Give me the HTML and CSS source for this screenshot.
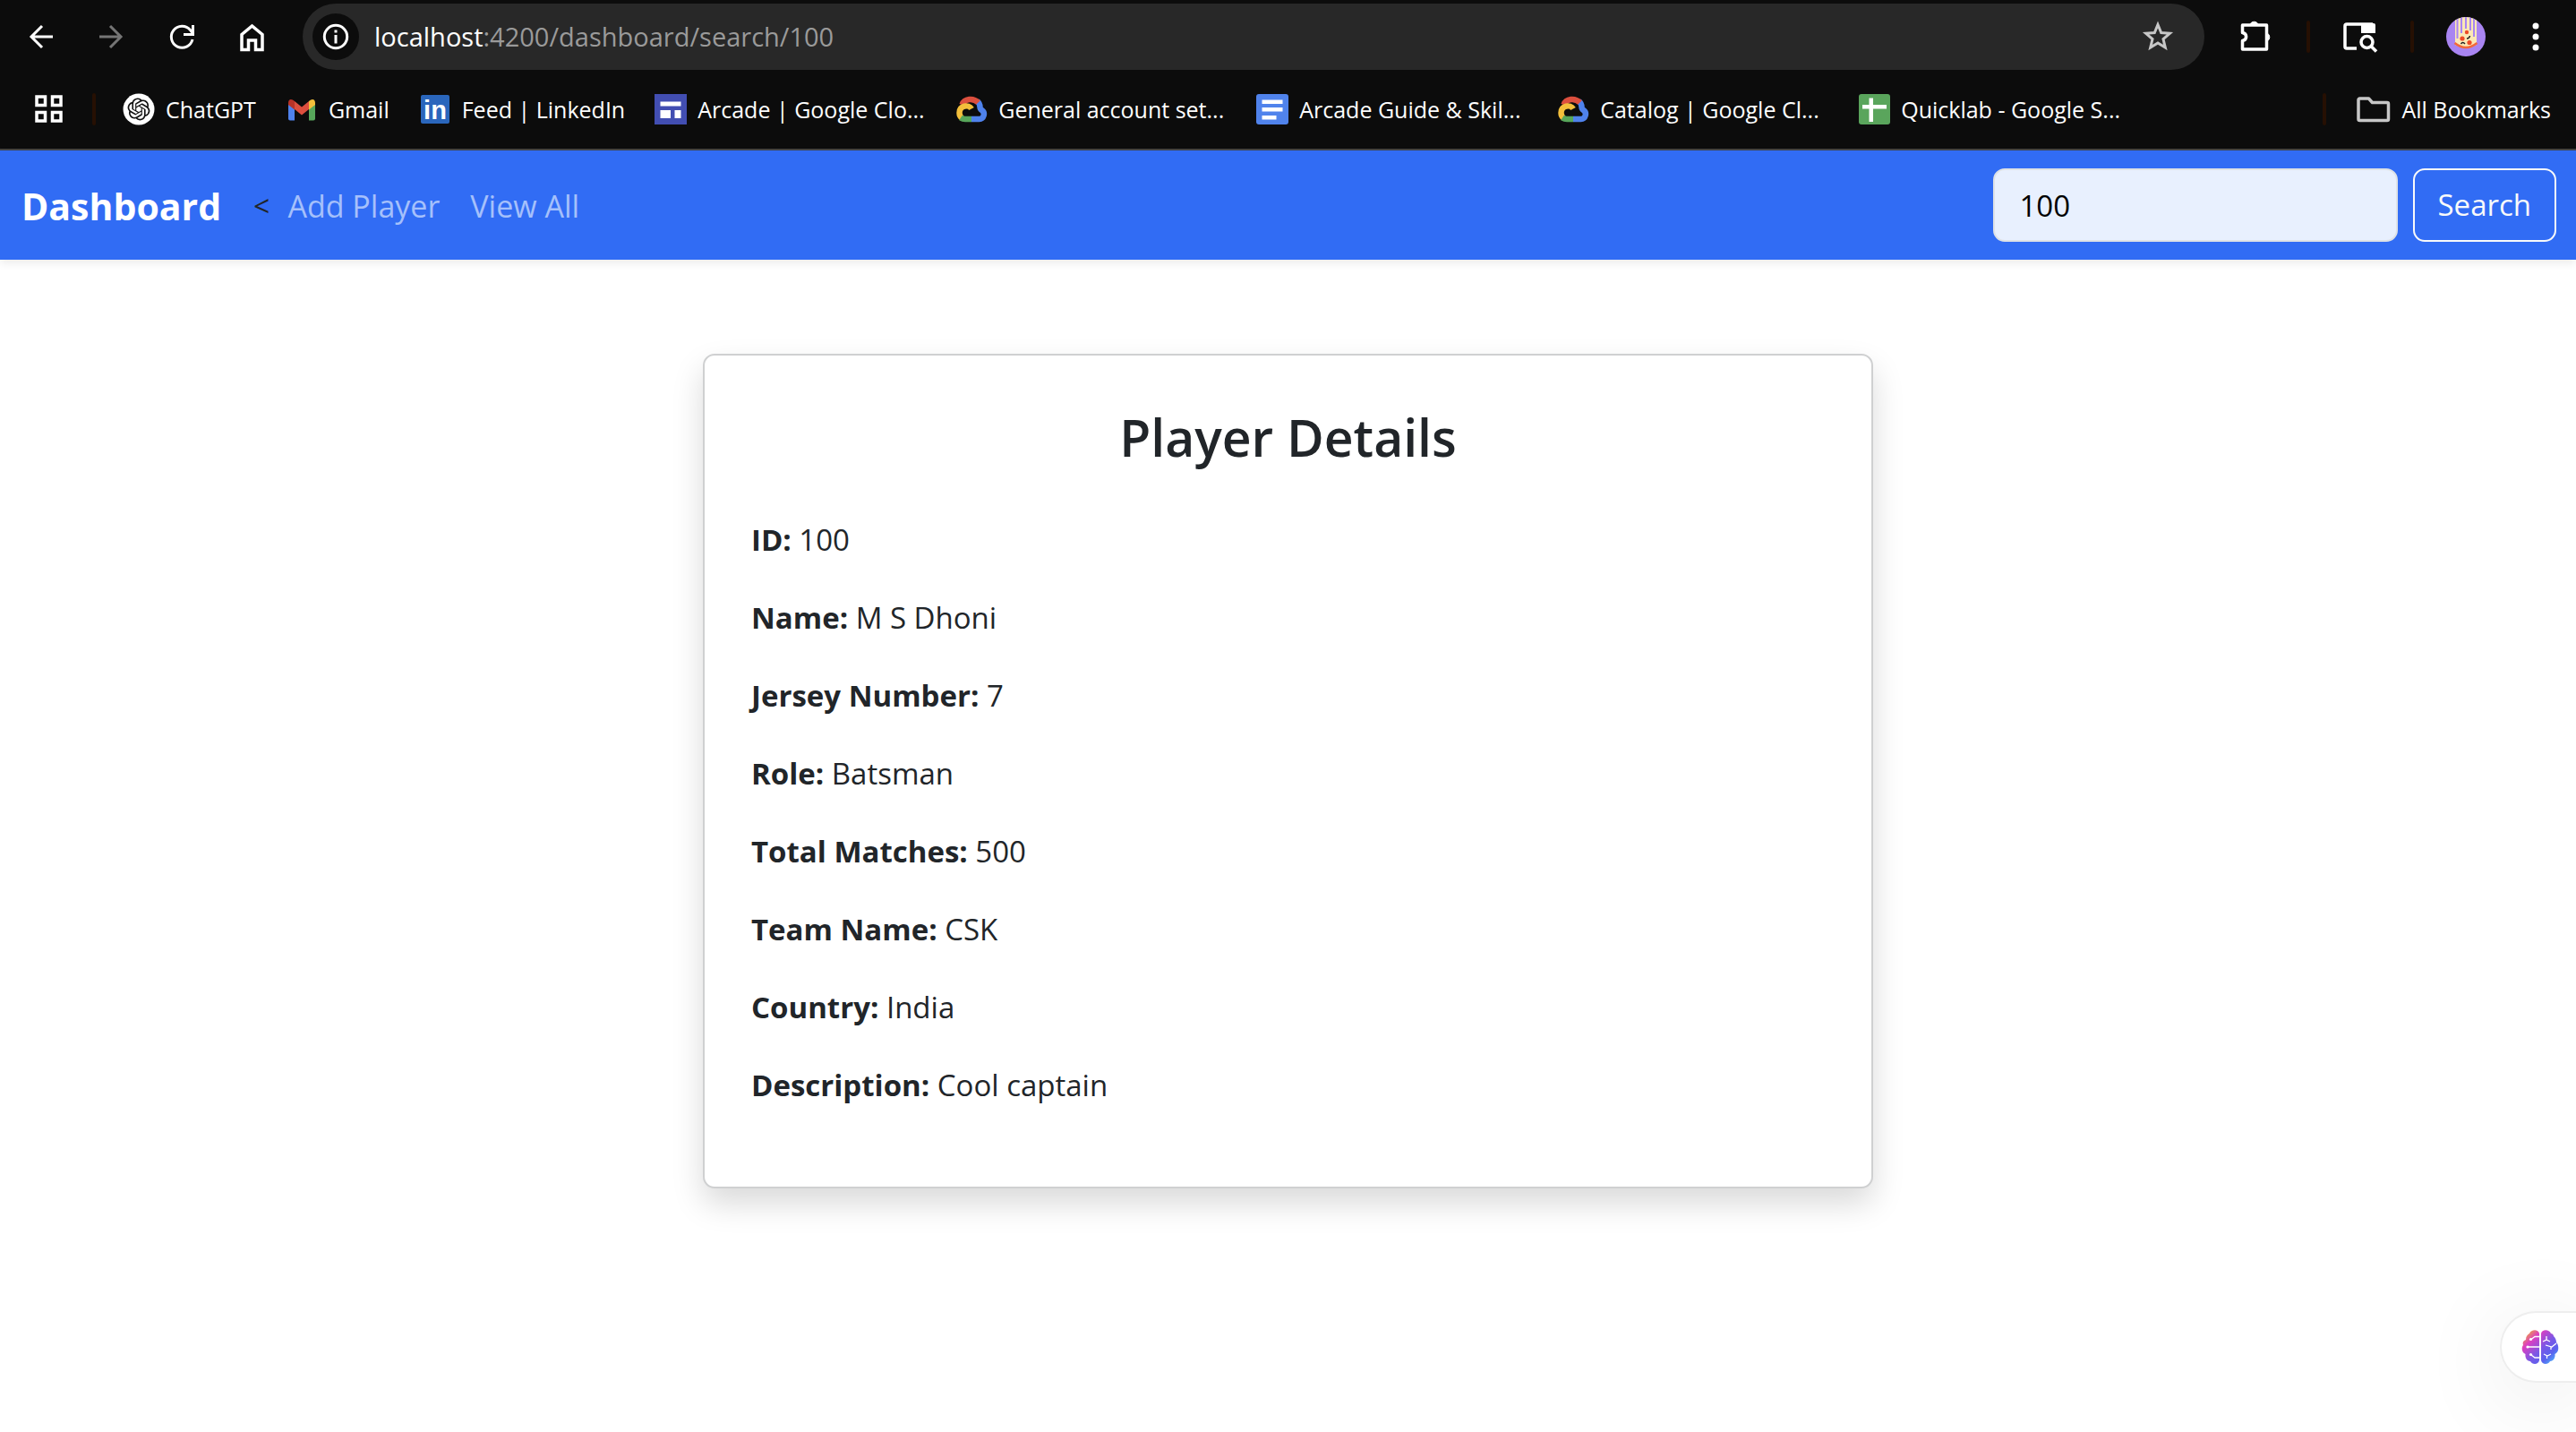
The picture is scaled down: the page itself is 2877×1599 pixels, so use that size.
FILE: index.html
```html
<!DOCTYPE html>
<html lang="en">
<head>
<meta charset="utf-8">
<meta name="viewport" content="width=device-width, initial-scale=1">
<title>Dashboard</title>
<link rel="stylesheet" href="styles.css">
</head>
<body>
<header class="browser">
  <div class="toolbar">
    <button class="icon-btn" type="button" aria-label="Back">
      <svg width="40" height="40" viewBox="0 0 40 40" fill="none" stroke="#fff" stroke-width="3"><path d="M33 20H9M21 8L9 20l12 12"/></svg>
    </button>
    <button class="icon-btn" type="button" aria-label="Forward">
      <svg width="40" height="40" viewBox="0 0 40 40" fill="none" stroke="#757575" stroke-width="3"><path d="M7 20h24M19 8l12 12-12 12"/></svg>
    </button>
    <button class="icon-btn" type="button" aria-label="Reload">
      <svg width="40" height="40" viewBox="0 0 40 40" fill="none" stroke="#fff" stroke-width="3"><path d="M33 23A12 12 0 1 1 30.500 12.500L33 16"/><path d="M33.500 7v10.500H23"/></svg>
    </button>
    <button class="icon-btn" type="button" aria-label="Home">
      <svg width="40" height="40" viewBox="0 0 40 40" fill="none" stroke="#fff" stroke-width="3.500"><path d="M10 34.500V17.500L21.500 8 33 17.500v17h-7.500V24h-8v10.500z"/></svg>
    </button>
    <div class="omnibox">
      <button class="site-info" type="button" aria-label="View site information">
        <svg width="32" height="32" viewBox="0 0 32 32" fill="none" stroke="#fff" stroke-width="3"><circle cx="16" cy="16" r="12.700"/><path d="M16 14v9.500M16 8.500v3"/></svg>
      </button>
      <div class="url"><span class="url-host">localhost</span>:4200/dashboard/search/100</div>
      <button class="icon-btn" type="button" aria-label="Bookmark this tab">
        <svg width="40" height="40" viewBox="0 0 40 40" fill="none" stroke="#c7c7c7" stroke-width="3"><path d="M20 6.500l3.700 9 9.700.8-7.400 6.300 2.300 9.500-8.300-5.100-8.300 5.100 2.300-9.500-7.400-6.300 9.700-.8z"/></svg>
      </button>
    </div>
    <div class="toolbar-actions">
      <button class="icon-btn" type="button" aria-label="Extensions">
        <svg width="40" height="40" viewBox="0 0 40 40"><path d="M4.500 7h27v27h-27v-9.500c5.500-1 5.500-8 0-9z" fill="none" stroke="#fff" stroke-width="3.500" stroke-linejoin="round"/><path d="M13 6a5 5 0 0 1 9 0zM32 16a5 5 0 0 1 0 9z" fill="#fff" stroke="#fff"/></svg>
      </button>
      <span class="divider"></span>
      <button class="icon-btn" type="button" aria-label="Search tabs">
        <svg width="40" height="40" viewBox="0 0 40 40" fill="none" stroke="#fff" stroke-width="3.500"><path d="M16 33H5a2 2 0 0 1-2-2V8a2 2 0 0 1 2-2h29"/><path d="M21 5h14a2 2 0 0 1 2 2v9H21z" fill="#fff" stroke="none"/><circle cx="27.500" cy="26" r="6.500"/><path d="M32 30.500l6 6"/></svg>
      </button>
      <span class="divider"></span>
      <button class="icon-btn" type="button" aria-label="Profile">
        <svg width="44" height="44" viewBox="0 0 44 44">
          <defs><clipPath id="avatar"><circle cx="22" cy="22" r="22"/></clipPath></defs>
          <g clip-path="url(#avatar)">
            <path d="M0 0h44v44H0z" fill="#a985f2"/>
            <path d="M10 0h24v31q-12 7-24 0z" fill="#fbe8b5"/>
            <path d="M12.500 0v24M17 0v18M22 0v13M27 0v15M31 0v22" stroke="#a985f2" stroke-width="2"/>
            <path d="M9.500 29q12.500 10 25 0" stroke="#f2693b" stroke-width="2.500" fill="none"/>
            <g fill="#ee4a25"><circle cx="23" cy="17" r="2.200"/><circle cx="18" cy="24" r="2.600"/><circle cx="26" cy="28.500" r="2.600"/></g>
            <path d="M23 24q3 0 3.500-3M16.500 30q2-3 4.500 0" stroke="#222" stroke-width="1.500" fill="none"/>
          </g>
        </svg>
      </button>
      <button class="icon-btn" type="button" aria-label="Menu">
        <svg width="40" height="40" viewBox="0 0 40 40" fill="#fff"><circle cx="20" cy="8" r="3.500"/><circle cx="20" cy="20" r="3.500"/><circle cx="20" cy="32" r="3.500"/></svg>
      </button>
    </div>
  </div>
  <nav class="bookmarks" aria-label="Bookmarks">
    <button class="icon-btn" type="button" aria-label="Apps">
      <svg width="36" height="36" viewBox="0 0 36 36" fill="none" stroke="#fff" stroke-width="3.500"><path d="M4 4h9.500v9.500H4zM21.500 4H31v9.500h-9.500zM4 21.500h9.500V31H4zM21.500 21.500H31V31h-9.500z"/></svg>
    </button>
    <span class="divider"></span>
    <div class="bookmark-list">
      <a class="bookmark" href="#">
        <svg width="36" height="36" viewBox="0 0 36 36"><circle cx="18" cy="18" r="17.500" fill="#fff"/><path transform="translate(5.500 5.500) scale(1.040)" fill="#111" d="M22.2819 9.8211a5.9847 5.9847 0 0 0-.5157-4.9108 6.0462 6.0462 0 0 0-6.5098-2.9A6.0651 6.0651 0 0 0 4.9807 4.1818a5.9847 5.9847 0 0 0-3.9977 2.9 6.0462 6.0462 0 0 0 .7427 7.0966 5.98 5.98 0 0 0 .511 4.9107 6.051 6.051 0 0 0 6.5146 2.9001A5.9847 5.9847 0 0 0 13.2599 24a6.0557 6.0557 0 0 0 5.7718-4.2058 5.9894 5.9894 0 0 0 3.9977-2.9001 6.0557 6.0557 0 0 0-.7475-7.0729zm-9.022 12.6081a4.4755 4.4755 0 0 1-2.8764-1.0408l.1419-.0804 4.7783-2.7582a.7948.7948 0 0 0 .3927-.6813v-6.7369l2.02 1.1686a.071.071 0 0 1 .038.052v5.5826a4.504 4.504 0 0 1-4.4945 4.4944zm-9.6607-4.1254a4.4708 4.4708 0 0 1-.5346-3.0137l.142.0852 4.783 2.7582a.7712.7712 0 0 0 .7806 0l5.8428-3.3685v2.3324a.0804.0804 0 0 1-.0332.0615L9.74 19.9502a4.4992 4.4992 0 0 1-6.1408-1.6464zM2.3408 7.8956a4.485 4.485 0 0 1 2.3655-1.9728V11.6a.7664.7664 0 0 0 .3879.6765l5.8144 3.3543-2.0201 1.1685a.0757.0757 0 0 1-.071 0l-4.8303-2.7865A4.504 4.504 0 0 1 2.3408 7.872zm16.5963 3.8558L13.1038 8.364 15.1192 7.2a.0757.0757 0 0 1 .071 0l4.8303 2.7913a4.4944 4.4944 0 0 1-.6765 8.1042v-5.6772a.79.79 0 0 0-.407-.667zm2.0107-3.0231l-.142-.0852-4.7735-2.7818a.7759.7759 0 0 0-.7854 0L9.409 9.2297V6.8974a.0662.0662 0 0 1 .0284-.0615l4.8303-2.7866a4.4992 4.4992 0 0 1 6.6802 4.66zM8.3065 12.863l-2.02-1.1638a.0804.0804 0 0 1-.038-.0567V6.0742a4.4992 4.4992 0 0 1 7.3757-3.4537l-.142.0805L8.704 5.459a.7948.7948 0 0 0-.3927.6813zm1.0976-2.3654l2.602-1.4998 2.6069 1.4998v2.9994l-2.5974 1.4997-2.6067-1.4997Z"/></svg>
        <span>ChatGPT</span>
      </a>
      <a class="bookmark" href="#">
        <svg width="36" height="36" viewBox="0 0 36 36"><path d="M3 12v16.500A2 2 0 0 0 5 30.500h5V16z" fill="#4f82ec"/><path d="M33 12v16.500a2 2 0 0 1-2 2h-5V16z" fill="#57a65a"/><path d="M10 9l8 6.500L26 9v9l-8 6.500L10 18z" fill="#dc4f3e"/><path d="M3 11c0-5 4-5 7-2v9.500L3 13z" fill="#b93328"/><path d="M33 11c0-5-4-5-7-2v9.500l7-5.500z" fill="#f3bf3b"/></svg>
        <span>Gmail</span>
      </a>
      <a class="bookmark" href="#">
        <svg width="36" height="36" viewBox="0 0 36 36"><rect x="2" y="2" width="32" height="32" rx="2" fill="#2a66bc"/><text x="18" y="29" text-anchor="middle" class="linkedin-mark">in</text></svg>
        <span>Feed | LinkedIn</span>
      </a>
      <a class="bookmark bookmark-long" href="#">
        <svg width="36" height="36" viewBox="0 0 36 36"><path d="M0 1h36v34H0z" fill="#424eb2"/><path d="M6.500 9.500h23v5h-23zM6.500 19h11.500v9H6.500zM22.500 19h7v9h-7z" fill="#fff"/></svg>
        <span>Arcade | Google Clo...</span>
      </a>
      <a class="bookmark bookmark-long" href="#">
        <svg width="36" height="36" viewBox="0 0 36 36"><use href="#cloud"/></svg>
        <span>General account set...</span>
      </a>
      <a class="bookmark bookmark-long" href="#">
        <svg width="36" height="36" viewBox="0 0 36 36"><rect y="1" width="36" height="34" rx="3" fill="#5083ec"/><path d="M6.500 7.500h23v4.500h-23zM6.500 16h23v4.500h-23zM6.500 25h16v4.500h-16z" fill="#fff"/></svg>
        <span>Arcade Guide &amp; Skil...</span>
      </a>
      <a class="bookmark bookmark-long" href="#">
        <svg width="36" height="36" viewBox="0 0 36 36">
          <g id="cloud" fill="none" stroke-width="6.500">
            <path d="M18 29h8.500a5.500 5.500 0 0 0 3-10c-1.500-1-2-1.500-2-3.500a9 9 0 0 0-3-6.500" stroke="#4f82ec"/>
            <path d="M7.500 13C10 6 20 5 25.500 10.500" stroke="#dc4f3e"/>
            <path d="M18 17.500C15 12 4.500 14 4.500 22c0 3 1 4.500 3 6" stroke="#f3bf3b"/>
            <path d="M6 27.500c1.500 1 3 1.500 5 1.500h7" stroke="#57a65a"/>
          </g>
        </svg>
        <span>Catalog | Google Cl...</span>
      </a>
      <a class="bookmark bookmark-long" href="#">
        <svg width="36" height="36" viewBox="0 0 36 36"><rect x="1" y="1" width="35" height="34" rx="3" fill="#5aa55c"/><path d="M12.500 5.500h4.500V13h15v4.500H17V32h-4.500V17.500H5V13h7.500z" fill="#fff"/></svg>
        <span>Quicklab - Google S...</span>
      </a>
    </div>
    <span class="divider"></span>
    <a class="bookmark all-bookmarks" href="#">
      <svg width="40" height="36" viewBox="0 0 40 36" fill="none" stroke="#c7c7c7" stroke-width="3.500" stroke-linejoin="round"><path d="M5.500 6h10l4 4.500H36a1.500 1.500 0 0 1 1.500 1.500v17a1.500 1.500 0 0 1-1.500 1.500H5.500A1.500 1.500 0 0 1 4 29V7.500A1.500 1.500 0 0 1 5.500 6z"/></svg>
      <span>All Bookmarks</span>
    </a>
  </nav>
</header>

<nav class="navbar" aria-label="Main">
  <a class="brand" href="#">Dashboard</a>
  <span class="stray">&lt;</span>
  <a class="nav-link" href="#">Add Player</a>
  <a class="nav-link" href="#">View All</a>
  <form class="search" role="search">
    <input class="search-input" type="text" value="100" aria-label="Search">
    <button class="search-btn" type="button">Search</button>
  </form>
</nav>

<main class="page">
  <section class="card">
    <h2 class="card-title">Player Details</h2>
    <p><strong>ID:</strong> 100</p>
    <p><strong>Name:</strong> M S Dhoni</p>
    <p><strong>Jersey Number:</strong> 7</p>
    <p><strong>Role:</strong> Batsman</p>
    <p><strong>Total Matches:</strong> 500</p>
    <p><strong>Team Name:</strong> CSK</p>
    <p><strong>Country:</strong> India</p>
    <p><strong>Description:</strong> Cool captain</p>
  </section>
</main>

<button class="assistant" type="button" aria-label="Open assistant">
  <svg width="42" height="40" viewBox="0 0 42 40">
    <defs>
      <linearGradient id="brain" x1="0" y1="0" x2="1" y2="1">
        <stop offset="0.080" stop-color="#f0a83c"/><stop offset="0.280" stop-color="#dc3fc0"/><stop offset="0.550" stop-color="#7a58e6"/><stop offset="0.750" stop-color="#5a62ee"/><stop offset="0.920" stop-color="#4cb4fb"/>
      </linearGradient>
    </defs>
    <path fill="url(#brain)" d="M20 5v30c-1 5-8 5-10 1-4 0-6-4-5.500-8C0 26 0 20 2 18c-1-3 0-5 3-6 0-4 2-6 4-7 2-5 10-5 11 0zM22 5v30c1 5 8 5 10 1 4 0 6-4 5.500-8C42 26 42 20 40 16c-1-1-1-1-1-1 0-3-1-5-3-7 0-2-2-3-3-3-2-5-10-5-11 0z"/>
    <g fill="none" stroke="#fff" stroke-width="1.300"><path d="M20 8.500h-5l-4 3M20 20H7M20 32h-5l-4-3M28 8v4l-4 2M28 12l4 2M27 18l7 2 5-4M33 20v3M25 28l4 2 4-2M28.500 30v3"/></g>
    <g fill="#fff"><circle cx="10.500" cy="11.500" r="1.600"/><circle cx="7" cy="20" r="1.600"/><circle cx="10.500" cy="28.500" r="1.600"/></g>
  </svg>
</button>
</body>
</html>
```
FILE: styles.css
```css
*,
*::before,
*::after {
  box-sizing: border-box;
}

body {
  margin: 0;
  min-height: 100vh;
  background: #fff;
  color: #212529;
  font-family: "Open Sans", "Noto Sans", sans-serif;
  font-size: 33px;
  line-height: 52px;
}

a {
  color: inherit;
  text-decoration: none;
}

button {
  font: inherit;
  cursor: pointer;
}

svg {
  display: block;
  flex: none;
}

/* Browser chrome */

.browser {
  background: #0c0c0c;
  color: #fff;
  border-bottom: 2px solid #444;
}

.toolbar {
  display: flex;
  align-items: center;
  gap: 38px;
  padding: 4px 25px 4px 26px;
}

.icon-btn {
  flex: none;
  padding: 0;
  border: 0;
  background: none;
}

.omnibox {
  flex: 1;
  display: flex;
  align-items: center;
  height: 74px;
  padding: 0 32px 0 11px;
  border-radius: 37px;
  background: #282828;
}

.site-info {
  display: grid;
  place-items: center;
  width: 52px;
  height: 52px;
  padding: 0;
  border: 0;
  border-radius: 50%;
  background: #0c0c0c;
}

.url {
  flex: 1;
  padding-left: 17px;
  color: #9a9a9a;
  font-size: 29px;
  white-space: nowrap;
}

.url-host {
  color: #fff;
}

.toolbar-actions {
  display: flex;
  align-items: center;
  gap: 36px;
}

.divider {
  flex: none;
  width: 4px;
  height: 36px;
  border-radius: 2px;
  background: #261003;
}

.bookmarks {
  display: flex;
  align-items: center;
  height: 84px;
  padding: 0 28px 4px 37px;
  font-size: 25px;
  line-height: 36px;
}

.bookmarks > .icon-btn {
  margin-right: 30px;
}

.bookmark-list {
  flex: 1;
  display: flex;
  gap: 33px;
  padding-left: 30px;
}

.bookmark {
  display: flex;
  align-items: center;
  gap: 12px;
  white-space: nowrap;
}

.bookmark-long {
  width: 303px;
}

.all-bookmarks {
  padding-left: 32px;
}

.linkedin-mark {
  fill: #fff;
  font: bold 29px "Liberation Sans", sans-serif;
}

/* App navigation */

.navbar {
  display: flex;
  align-items: center;
  padding: 20px 22px 20px 24px;
  background: #316cf4;
  box-shadow: 0 4px 9px rgba(0, 0, 0, 0.08);
}

.brand,
.nav-link {
  padding-top: 2px;
}

.brand {
  color: #fff;
  font-size: 41px;
  font-weight: 700;
}

.stray {
  padding: 2px 20px 0 36px;
  font-size: 32px;
}

.nav-link {
  margin-right: 34px;
  color: #a5c0fb;
  font-size: 34px;
}

.search {
  display: flex;
  gap: 17px;
  margin-left: auto;
}

.search-input {
  width: 452px;
  height: 82px;
  padding: 0 28px;
  border: 2px solid #dee2e6;
  border-radius: 13px;
  background: #e8f0fe;
  color: #000;
  font: inherit;
}

.search-btn {
  height: 82px;
  padding: 0 26px;
  border: 2px solid #f8f9fa;
  border-radius: 13px;
  background: none;
  color: #f8f9fa;
}

/* Player card */

.page {
  padding: 105px 24px;
}

.card {
  max-width: 1307px;
  margin: 0 auto;
  padding: 52px;
  border: 2px solid #cfd0d1;
  border-radius: 13px;
  background: #fff;
  box-shadow: 0 17px 35px rgba(0, 0, 0, 0.15);
}

.card-title {
  margin: 0 0 50px;
  font-size: 57px;
  font-weight: 600;
  line-height: 78px;
  text-align: center;
}

.card p {
  margin: 0 0 35px;
}

/* Assistant tab docked to the window edge */

.assistant {
  position: fixed;
  right: 0;
  bottom: 55px;
  padding: 18px 19px 18px 22px;
  border: 2px solid #eee;
  border-right: 0;
  border-radius: 40px 0 0 40px;
  background: #fff;
  box-shadow: 0 16px 100px rgba(0, 0, 0, 0.1);
}
```
